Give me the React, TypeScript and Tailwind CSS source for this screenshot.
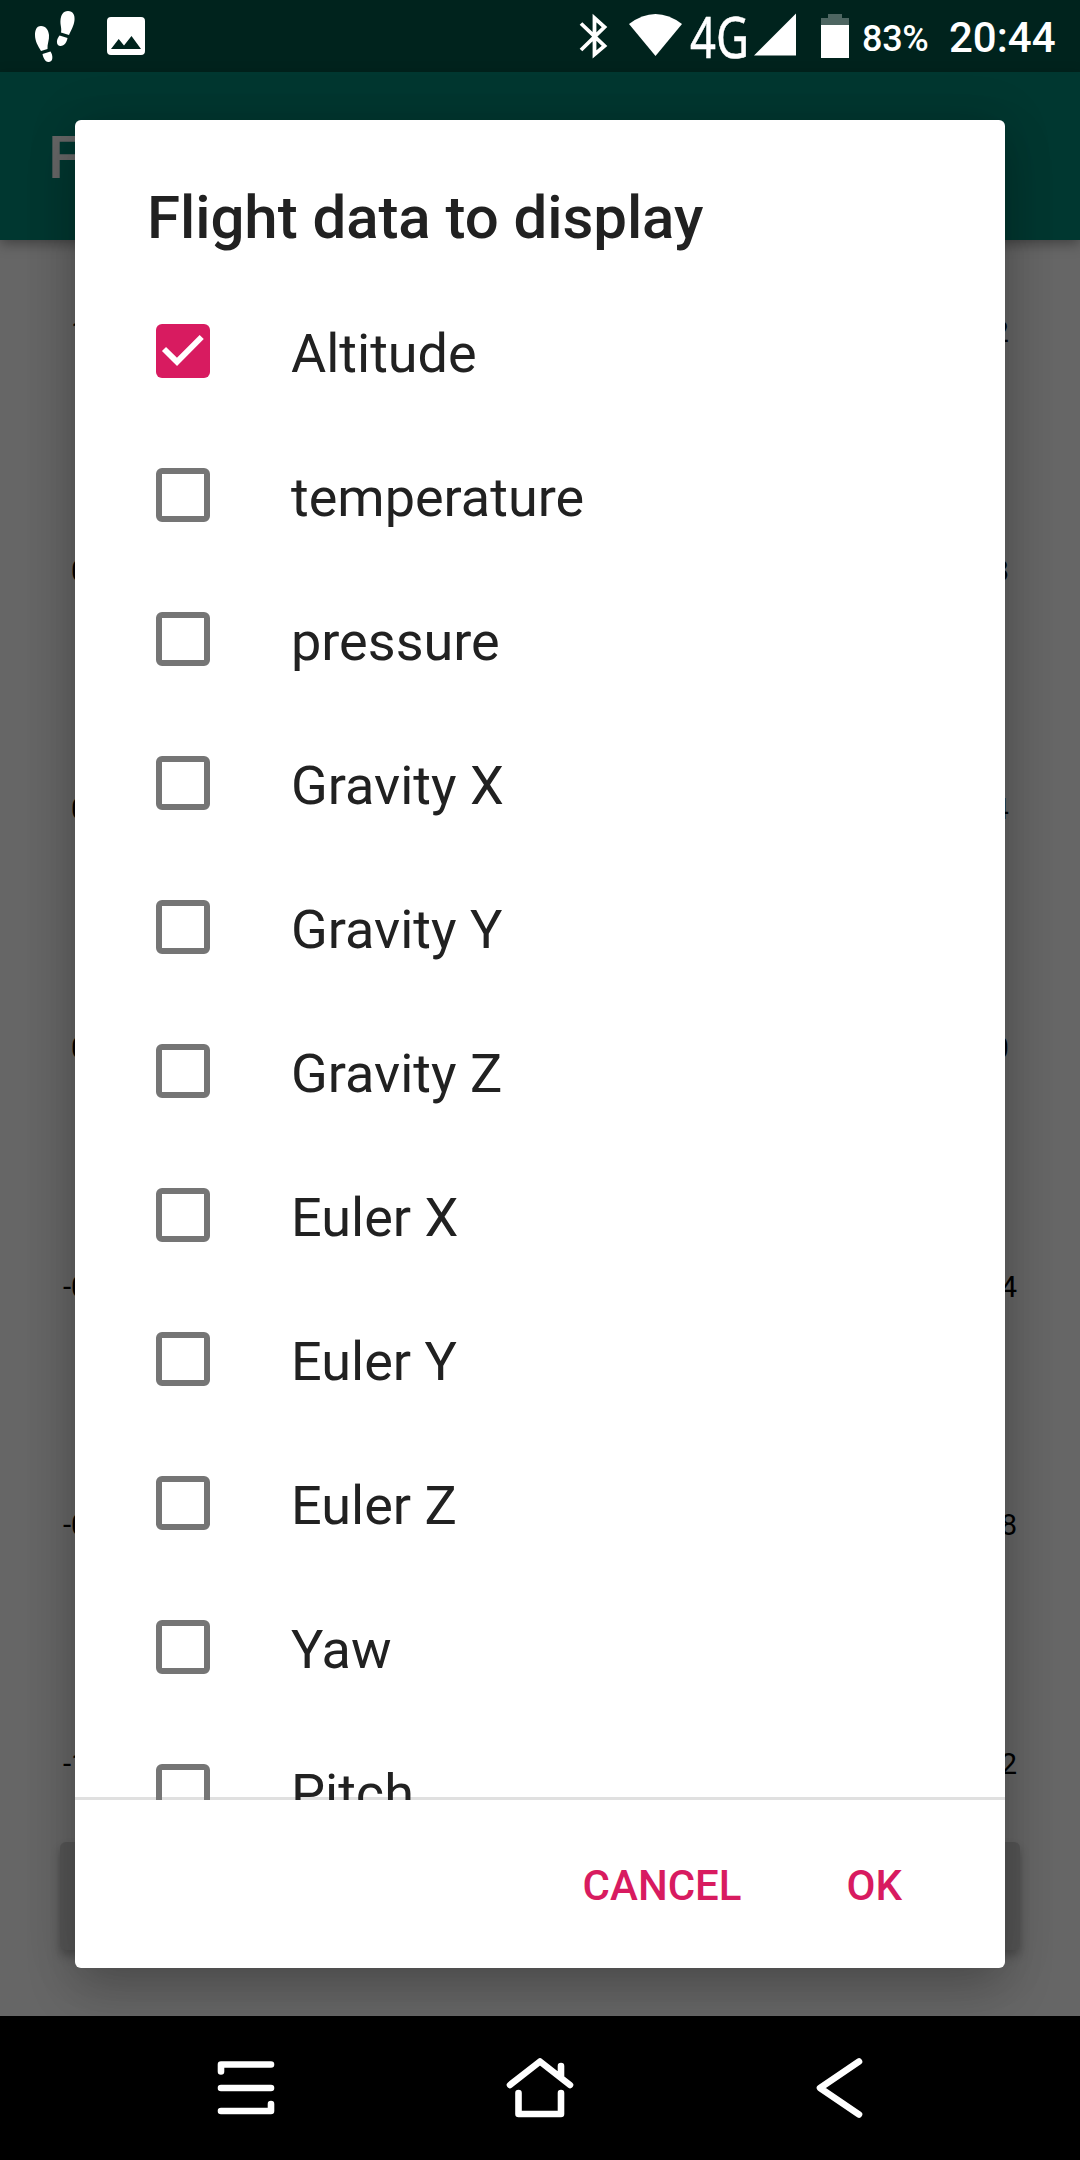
const fields = [
  'Altitude', 'temperature', 'pressure', 'Gravity X', 'Gravity Y', 'Gravity Z',
  'Euler X', 'Euler Y', 'Euler Z', 'Yaw', 'Pitch',
];

const ticks = ['1.2', '0.8', '0.4', '0.0', '-0.4', '-0.8', '-1.2'];

function Axis({ side }: { side: 'left' | 'right' }) {
  return (
    <div
      className={
        'flex flex-col text-[29.5px] leading-[30px] text-black ' +
        (side === 'left' ? 'w-[112px] items-end' : 'w-[112px] items-start')
      }
    >
      {ticks.map((t) => (
        <div key={t} className="h-[238.7px] shrink-0">{t}</div>
      ))}
    </div>
  );
}

function StatusBar() {
  return (
    <header className="flex h-[72px] shrink-0 items-center bg-[#00231d] text-white">
      <svg className="h-[72px] w-[560px]" viewBox="0 0 560 72" fill="white">
        <path d="M41 26 C36 26 35 31 35 35 C35 41 38 46 41 51 L47.500 49 C47 44 49.500 40 49 35 C48.500 30 46 26 41 26Z" />
        <path d="M42.500 54 L50.500 51.500 C53 55 53.500 61.500 49 62 C45 62.500 43 57 42.500 54Z" />
        <path d="M68 11 C73 11 75 15 74.500 20 C74 26 71 30 69 35 L61 32.500 C62 28 60 25 60.500 20 C61 15 63 11 68 11Z" />
        <path d="M59.500 35.500 L67.500 38 C67 42 64 46.500 60 46 C55.500 45 56.500 39 59.500 35.500Z" />
        <path fillRule="evenodd" d="M111 17h30a4 4 0 0 1 4 4v30a4 4 0 0 1-4 4h-30a4 4 0 0 1-4-4v-30a4 4 0 0 1 4-4ZM111 49h30l-9.500-13-7.500 9.500-5.300-6.500Z" />
      </svg>
      <svg className="h-[72px] w-[300px]" viewBox="560 0 300 72" fill="white">
        <path d="M581 23.500 L604.500 46 L594.500 54.500 V18 L604.500 27 L581 50" fill="none" stroke="white" strokeWidth="3.800" />
        <path d="M629 24 Q655.500 4 682 24 L655.500 56Z" />
        <text x="690" y="57.500" fontFamily="Noto Sans" fontSize="56" textLength="59" lengthAdjust="spacingAndGlyphs" stroke="white" strokeWidth=".5">4G</text>
        <path d="M754 55.500 L796 13.500 V55.500Z" />
        <path d="M821 25V18h7v-4h14v4h7v7Z" fillOpacity=".3" />
        <path d="M821 25h28v33h-28Z" />
      </svg>
      <span className="mt-[5px] ml-[2px] w-[66px] text-[36px] font-medium tracking-[-0.300px]">83%</span>
      <span className="mt-[2px] ml-[21px] text-[42px] font-medium">20:44</span>
    </header>
  );
}

function CheckBox({ checked }: { checked: boolean }) {
  return checked ? (
    <span className="flex size-[54px] shrink-0 items-center justify-center rounded-[6px] bg-[#d81b60]">
      <svg className="size-[54px]" viewBox="0 0 54 54" fill="none" stroke="white" strokeWidth="5.800">
        <path d="M8 25 L21 37.800 L45.700 13" />
      </svg>
    </span>
  ) : (
    <span className="size-[54px] shrink-0 rounded-[6px] border-[6px] border-[#757575]" />
  );
}

function Dialog() {
  return (
    <section className="absolute top-[120px] left-[75px] z-20 flex h-[1848px] w-[930px] flex-col rounded-[6px] bg-white shadow-[0_22px_50px_rgba(0,0,0,0.20),0_0_50px_rgba(0,0,0,0.14)]">
      <h1 className="h-[159px] shrink-0 pt-[63px] pl-[72px] text-[60px] leading-[70px] font-medium tracking-[-0.070px] text-[#212121]">
        Flight data to display
      </h1>
      <div className="h-[1521px] overflow-hidden bg-[linear-gradient(#e0e0e0,#e0e0e0)] bg-[length:100%_3px] bg-bottom bg-no-repeat">
        {fields.map((f, i) => (
          <label key={f} className="flex h-[144px] items-center pl-[81px] text-[54px] text-[#212121]">
            <CheckBox checked={i === 0} />
            <span className="mt-[4px] ml-[81px]">{f}</span>
          </label>
        ))}
      </div>
      <div className="flex h-[168px] items-center justify-end pt-[2px] pr-[103px] text-[42px] font-medium text-[#d81b60]">
        <button>CANCEL</button>
        <button className="ml-[105px]">OK</button>
      </div>
    </section>
  );
}

function NavBar() {
  return (
    <nav className="relative z-30 flex h-[144px] shrink-0 items-center bg-black">
      <svg className="h-[144px] w-[1080px]" viewBox="0 2016 1080 144" fill="none" stroke="white" strokeWidth="6.600" strokeLinecap="round" strokeLinejoin="round">
        <path d="M221 2071.500V2064.500H271M221 2088H271M221 2111H271V2104" />
        <path d="M510 2085L540 2061.500L570 2085M561 2076V2066M518.500 2093V2114H561V2093" />
        <path d="M859 2061.500L820 2088L859 2114.500" />
      </svg>
    </nav>
  );
}

export default function App() {
  return (
    <div className="relative flex h-[2160px] w-[1080px] flex-col overflow-hidden bg-[#666666] font-['Roboto',sans-serif]">
      <StatusBar />
      <div className="relative z-10 flex h-[168px] shrink-0 items-center bg-[#003730] pl-[48px] text-[60px] font-medium text-[#666666] shadow-[0_4px_12px_rgba(0,0,0,0.35)]">
        <span className="mt-[4px]">Flight</span>
      </div>
      <main className="flex grow flex-col">
        <div className="flex h-[1602px] shrink-0 justify-between overflow-hidden pt-[77px]">
          <Axis side="left" />
          <Axis side="right" />
        </div>
        <div className="mx-[60px] h-[108px] rounded-[6px] bg-[#565656] shadow-[0_6px_10px_rgba(0,0,0,0.25)]" />
      </main>
      <Dialog />
      <NavBar />
    </div>
  );
}
